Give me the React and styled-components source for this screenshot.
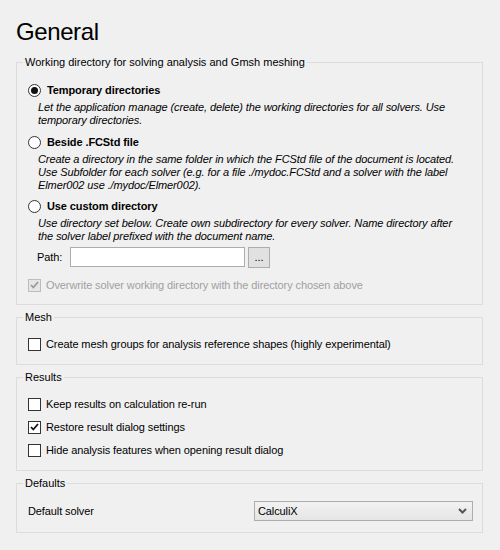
import React from 'react';
import styled, { createGlobalStyle } from 'styled-components';

const GlobalStyle = createGlobalStyle`
  html, body {
    margin: 0;
    padding: 0;
    background: #f0f0f0;
  }
  body {
    font-family: "Liberation Sans", Arial, sans-serif;
    font-size: 11px;
    color: #000;
  }
`;

const Page = styled.div`
  width: 500px;
  height: 550px;
  box-sizing: border-box;
  padding: 17px 17px 0 16px;
`;

const Title = styled.h1`
  margin: 0;
  font-size: 24px;
  font-weight: normal;
  letter-spacing: -0.4px;
  line-height: 30px;
  height: 30px;
`;

const Group = styled.fieldset`
  margin: ${(p) => p.$top}px 0 0;
  padding: 0;
  border: 1px solid #dcdcdc;
  min-width: 0;
`;

const Legend = styled.legend`
  margin-left: 6px;
  padding: 0 2px;
  line-height: 13px;
`;

const Body = styled.div`
  padding: ${(p) => p.$top || 11}px 9px ${(p) => p.$bottom}px 11px;
  display: flex;
  flex-direction: column;
  letter-spacing: -0.1px;
`;

const Row = styled.label`
  display: flex;
  align-items: center;
  height: 18px;
  gap: ${(p) => p.$gap || 5}px;
  margin-top: ${(p) => p.$mt || 0}px;
  color: ${(p) => (p.$disabled ? '#a0a0a0' : '#000')};
  font-weight: ${(p) => (p.$bold ? 'bold' : 'normal')};
`;

const Radio = styled.span`
  position: relative;
  width: 11px;
  height: 11px;
  border: 1px solid #333;
  border-radius: 50%;
  background: #fff;
  flex: none;

  &::after {
    content: '';
    display: ${(p) => (p.$checked ? 'block' : 'none')};
    position: absolute;
    left: 2px;
    top: 2px;
    width: 7px;
    height: 7px;
    border-radius: 50%;
    background: #111;
  }
`;

const Box = styled.span`
  display: flex;
  align-items: center;
  justify-content: center;
  width: 11px;
  height: 11px;
  border: 1px solid ${(p) => (p.$disabled ? '#bcbcbc' : '#333')};
  background: ${(p) => (p.$disabled ? '#e6e6e6' : '#fff')};
  flex: none;
`;

const Desc = styled.div`
  margin: 2px 0 0 10px;
  font-style: italic;
  line-height: 13px;
`;

const PathRow = styled.div`
  display: flex;
  align-items: center;
  height: 20px;
  margin: 4px 0 0 9px;
`;

const PathLabel = styled.span`
  width: 33px;
`;

const TextInput = styled.div`
  width: 173px;
  height: 18px;
  border: 1px solid #adadad;
  background: #fff;
`;

const DotsButton = styled.div`
  width: 20px;
  height: 19px;
  margin-left: 3px;
  border: 1px solid #adadad;
  background: #e1e1e1;
  display: flex;
  align-items: center;
  justify-content: center;
  line-height: 1;
`;

const SolverRow = styled.div`
  display: flex;
  align-items: center;
  justify-content: space-between;
  height: 20px;
`;

const Combo = styled.div`
  width: 209px;
  height: 18px;
  border: 1px solid #adadad;
  background: linear-gradient(#f2f2f2, #e5e5e5);
  display: flex;
  align-items: center;
  justify-content: space-between;
  padding: 0 5px 0 3px;
`;

const Check = ({ checked, disabled }) => (
  <Box $disabled={disabled}>
    {checked && (
      <svg width="9" height="8" viewBox="0 0 9 8">
        <polyline
          points="1,4 3.3,6.5 8,1"
          fill="none"
          stroke={disabled ? '#9a9a9a' : '#111'}
          strokeWidth="1.8"
        />
      </svg>
    )}
  </Box>
);

const Chevron = () => (
  <svg width="9" height="6" viewBox="0 0 9 6">
    <polyline points="1,1 4.5,4.5 8,1" fill="none" stroke="#555" strokeWidth="2" />
  </svg>
);

export default function App() {
  return (
    <>
      <GlobalStyle />
      <Page>
        <Title>General</Title>

        <Group $top={9}>
          <Legend>Working directory for solving analysis and Gmsh meshing</Legend>
          <Body $top={12} $bottom={10}>
            <Row $bold $gap={6}>
              <Radio $checked />
              Temporary directories
            </Row>
            <Desc>
              Let the application manage (create, delete) the working directories for all solvers. Use
              <br />
              temporary directories.
            </Desc>

            <Row $bold $gap={6} $mt={6}>
              <Radio />
              Beside .FCStd file
            </Row>
            <Desc>
              Create a directory in the same folder in which the FCStd file of the document is located.
              <br />
              Use Subfolder for each solver (e.g. for a file ./mydoc.FCStd and a solver with the label
              <br />
              Elmer002 use ./mydoc/Elmer002).
            </Desc>

            <Row $bold $gap={6} $mt={5}>
              <Radio />
              Use custom directory
            </Row>
            <Desc>
              Use directory set below. Create own subdirectory for every solver. Name directory after
              <br />
              the solver label prefixed with the document name.
            </Desc>

            <PathRow>
              <PathLabel>Path:</PathLabel>
              <TextInput />
              <DotsButton>...</DotsButton>
            </PathRow>

            <Row $disabled $mt={9}>
              <Check checked disabled />
              Overwrite solver working directory with the directory chosen above
            </Row>
          </Body>
        </Group>

        <Group $top={6}>
          <Legend>Mesh</Legend>
          <Body $bottom={11}>
            <Row>
              <Check />
              Create mesh groups for analysis reference shapes (highly experimental)
            </Row>
          </Body>
        </Group>

        <Group $top={6}>
          <Legend>Results</Legend>
          <Body $bottom={11}>
            <Row>
              <Check />
              Keep results on calculation re-run
            </Row>
            <Row $mt={5}>
              <Check checked />
              Restore result dialog settings
            </Row>
            <Row $mt={5}>
              <Check />
              Hide analysis features when opening result dialog
            </Row>
          </Body>
        </Group>

        <Group $top={6}>
          <Legend>Defaults</Legend>
          <Body $bottom={11}>
            <SolverRow>
              <span>Default solver</span>
              <Combo>
                <span>CalculiX</span>
                <Chevron />
              </Combo>
            </SolverRow>
          </Body>
        </Group>
      </Page>
    </>
  );
}
